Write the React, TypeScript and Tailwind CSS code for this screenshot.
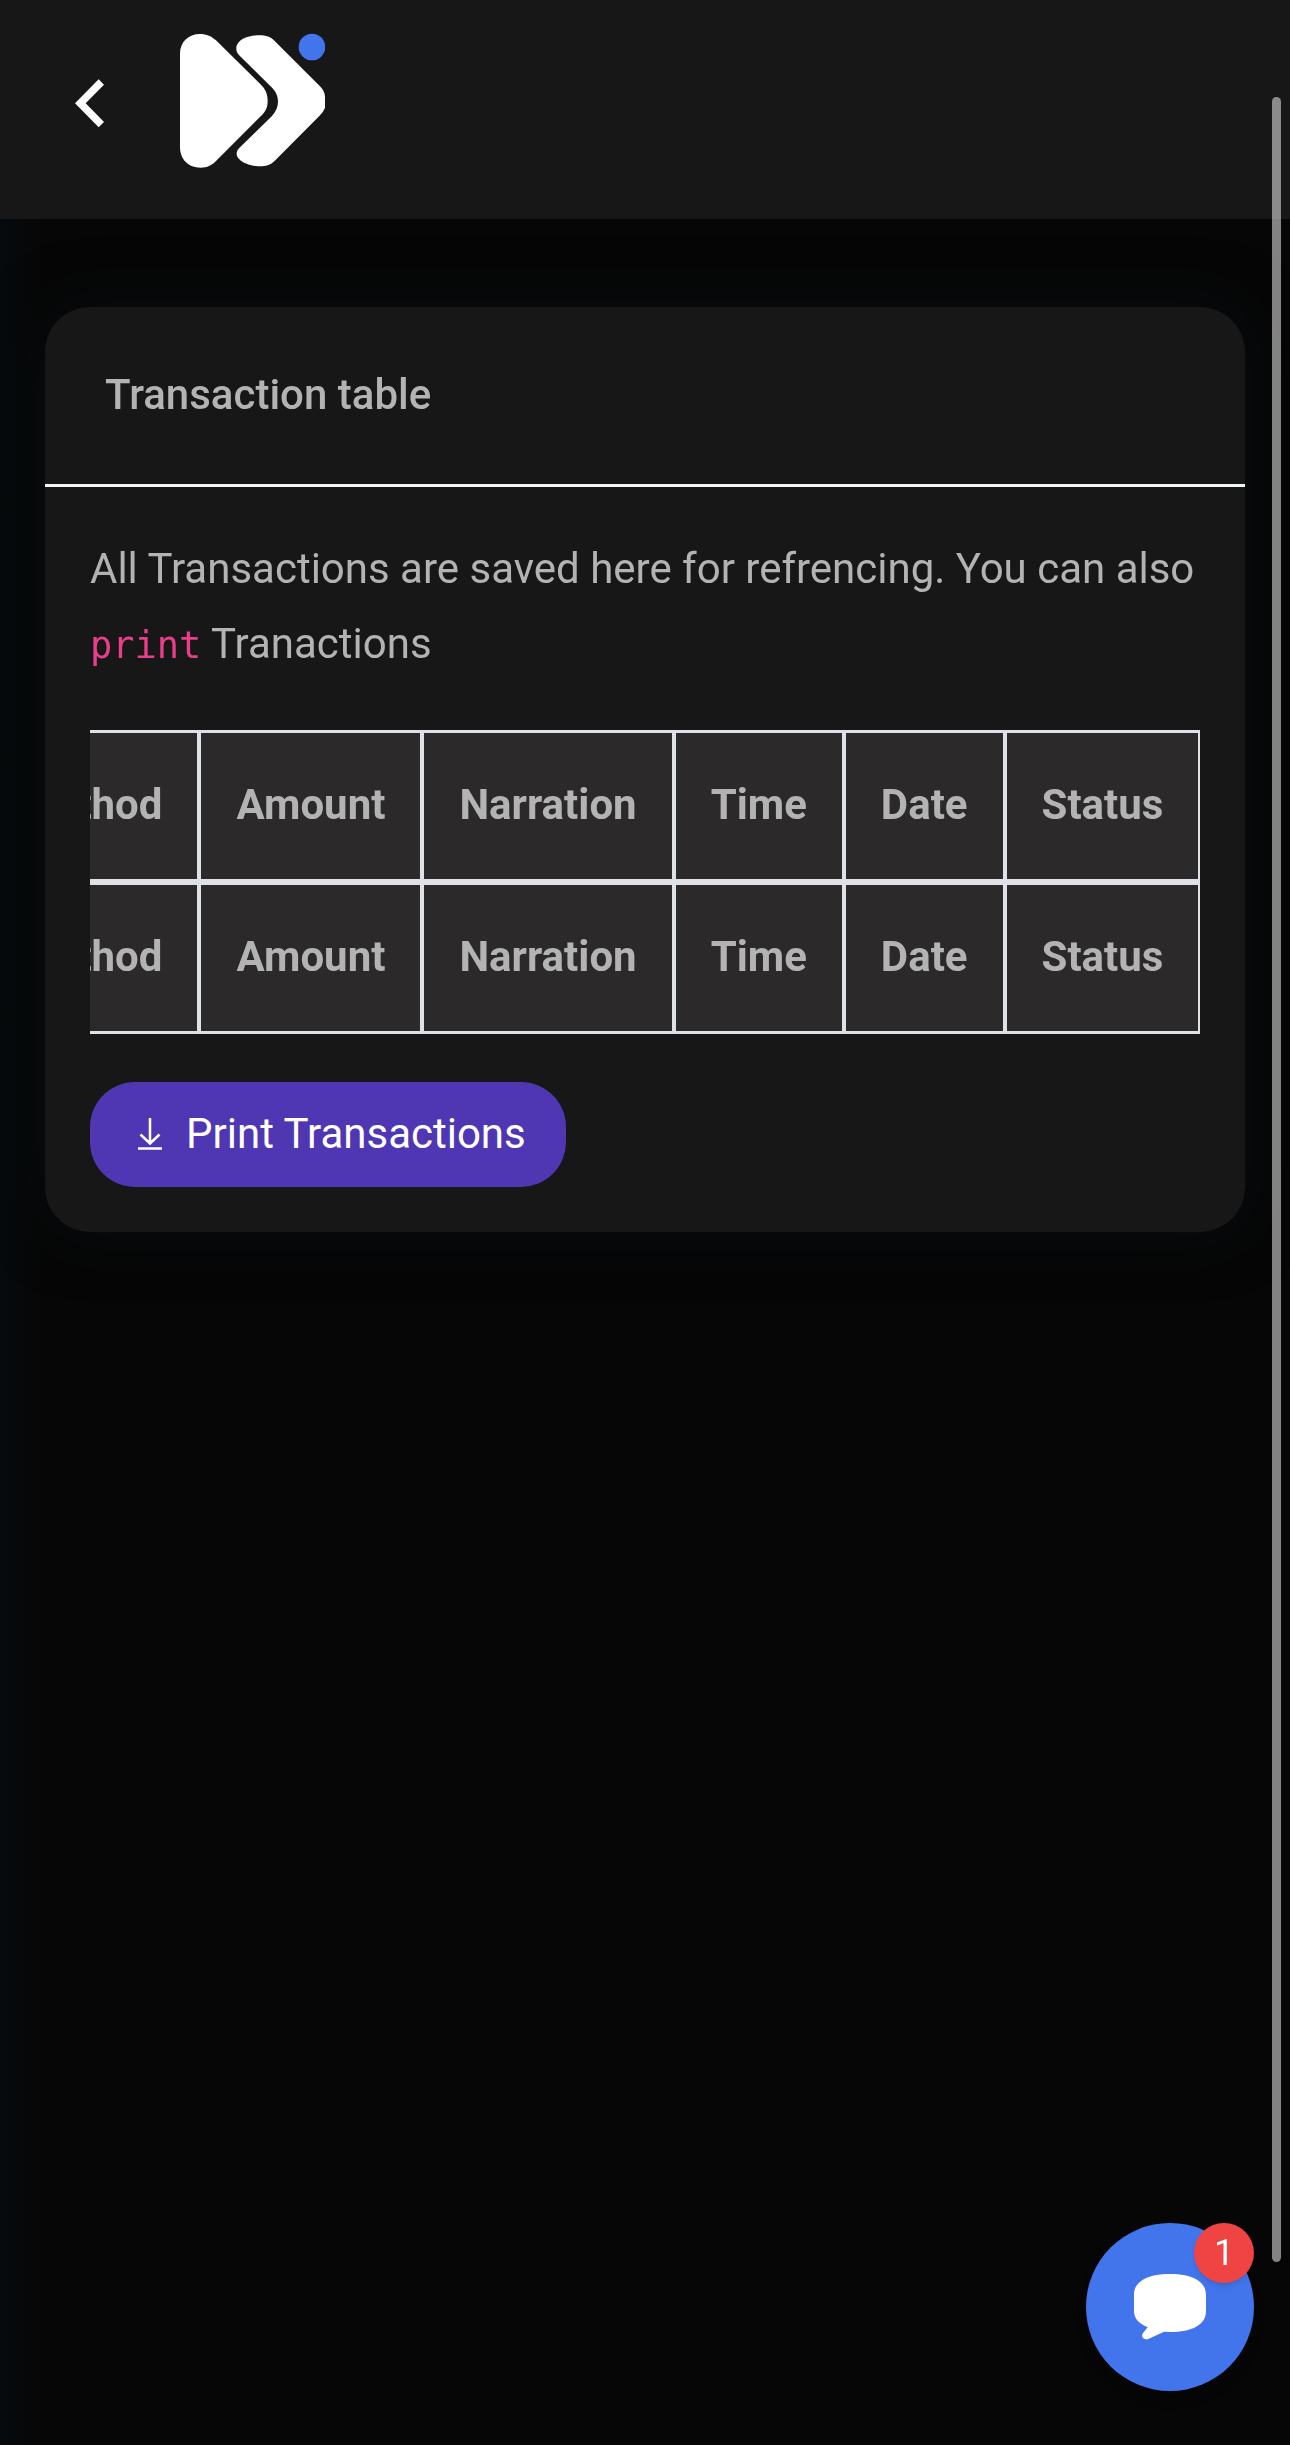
import React, { useLayoutEffect, useRef } from "react";

const columns = ["Id", "Method", "Amount", "Narration", "Time", "Date", "Status"];

const Logo: React.FC = () => (
  <svg viewBox="420 98 435 405" className="h-[135px] w-[145px]" aria-hidden="true">
    <path
      fill="#fff"
      d="M420 160C420 125 445 101 480 101C500 101 515 108 528 120L660 250C676 265 683 280 683 302C683 322 676 335 662 348L525 485C512 497 500 502 482 502C446 502 420 478 420 440Z"
    />
    <path
      fill="#fff"
      d="M589 146C588 120 620 105 658 105C678 105 692 110 704 122L840 258C850 268 855 280 855 290V322C850 333 848 336 838 347L703 483C690 495 678 498 660 498C625 498 588 480 590 458C591 450 595 446 600 441L696 347C708 334 714 320 714 303C714 288 708 275 697 263L599 166C592 159 589 154 589 146Z"
    />
    <circle cx="816" cy="140" r="40" fill="#4275ec" />
  </svg>
);

const Header: React.FC = () => (
  <header className="flex items-center gap-[76px] bg-[#171717] px-[75px] pt-[33px] pb-[51px]">
    <a href="#" aria-label="Back">
      <svg viewBox="106 221 87 162" className="h-[54px] w-[29px]" aria-hidden="true">
        <path fill="#fff" d="M106 309L177 237L193 253L138 309L193 365L177 381Z" />
      </svg>
    </a>
    <a href="#" aria-label="Home">
      <Logo />
    </a>
  </header>
);

const HeadingRow: React.FC = () => (
  <tr>
    {columns.map((c) => (
      <th
        key={c}
        className="border-x-4 border-y-[3px] border-[#dee2e6] px-[35px] pt-10 pb-[43px] text-left font-bold last:border-r-2"
      >
        {c}
      </th>
    ))}
  </tr>
);

const TransactionTable: React.FC = () => {
  const wrapper = useRef<HTMLDivElement>(null);

  // start on the last columns
  useLayoutEffect(() => {
    if (wrapper.current) {
      wrapper.current.scrollLeft = wrapper.current.scrollWidth;
    }
  }, []);

  return (
    <div ref={wrapper} className="mt-[49px] overflow-x-auto [scrollbar-width:none]">
      <table className="w-full border-collapse bg-[#2b292a] leading-[63px] whitespace-nowrap">
        <thead className="border-b-[6px] border-[#dee2e6]">
          <HeadingRow />
        </thead>
        <tfoot>
          <HeadingRow />
        </tfoot>
      </table>
    </div>
  );
};

const ChatButton: React.FC = () => (
  <button
    type="button"
    aria-label="Open chat, 1 new message"
    className="fixed right-9 bottom-[54px] flex size-[168px] items-center justify-center rounded-full bg-[#4275ec] shadow-lg"
  >
    <svg viewBox="222 222 216 198" className="h-[66px] w-[72px]" aria-hidden="true">
      <path
        fill="#fff"
        d="M330 222C396 222 438 243 438 285V333C438 375 396 396 330 396L312 395L265 417C252 422 241 410 249 399L263 382C235 370 222 355 222 333V285C222 243 264 222 330 222Z"
      />
    </svg>
    <span className="absolute top-0 right-0 flex size-[60px] items-center justify-center rounded-full bg-[#f04444] text-4xl text-white shadow-md">
      1
    </span>
  </button>
);

export default function App() {
  return (
    <div className="min-h-screen bg-[#060606] bg-linear-to-r from-[#060a0c] to-[#060606] to-[45px] font-[Roboto,sans-serif] text-[42px] text-[#b3b3b3]">
      <Header />
      <main className="px-[45px] pt-[88px] pb-[45px]">
        <section className="rounded-[45px] bg-[#171717] shadow-[0_0_60px_#080c0f]">
          <h1 className="border-b-[3px] border-[#f2f7f2] px-[60px] pt-14 pb-[58px] leading-[63px] font-medium">
            Transaction table
          </h1>
          <div className="px-[45px] pt-11 pb-[45px]">
            <p className="leading-[75px]">
              All Transactions are saved here for refrencing. You can also{" "}
              <code className="font-['DejaVu_Sans_Mono',monospace] text-[37px] leading-none text-[#e83e8c]">
                print
              </code>{" "}
              Tranactions
            </p>
            <TransactionTable />
            <button
              type="button"
              className="mt-12 flex h-[105px] items-center gap-6 rounded-[45px] bg-[#4f36b3] pr-10 pb-0.5 pl-12 text-white"
            >
              <svg viewBox="0 0 24 32" className="h-8 w-6" fill="none" stroke="currentColor" strokeWidth="2.5" aria-hidden="true">
                <path d="M12 0V26M2.500 16.500L12 25.500L21.500 16.500M0 30.500H24" />
              </svg>
              Print Transactions
            </button>
          </div>
        </section>
      </main>
      <ChatButton />
      <div className="fixed top-[97px] right-[9px] bottom-[183px] w-[9px] rounded-full bg-white/50" />
    </div>
  );
}
